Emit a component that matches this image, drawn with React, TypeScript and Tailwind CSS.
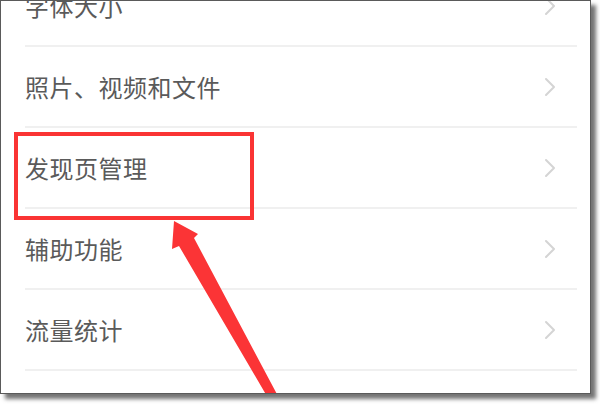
const items = ["字体大小", "照片、视频和文件", "发现页管理", "辅助功能", "流量统计"];

function Chevron() {
  return (
    <svg width="12" height="20" viewBox="0 0 12 20" fill="none" className="shrink-0">
      <path d="M2 2l8 8-8 8" stroke="#d4d4d4" strokeWidth="2" strokeLinecap="round" strokeLinejoin="round" />
    </svg>
  );
}

export default function App() {
  return (
    <div className="w-[600px] h-[404px] bg-white">
      <div className="relative w-[591px] h-[394px] overflow-hidden bg-white border border-[#5a5a5a] shadow-[5px_5px_4px_rgba(0,0,0,0.55)]">
        {/* settings list */}
        <div className="-mt-[35px] flex flex-col" style={{ fontFamily: '"Noto Sans CJK SC", "Noto Sans", sans-serif' }}>
          {items.map((label) => (
            <div key={label} className="h-[81px] pl-[24px] pr-[13px] flex flex-col">
              <div className="flex-1 flex items-center justify-between pr-[21px]">
                <span className="text-[24px] tracking-[0.5px] text-[#5a5a5a] leading-none">{label}</span>
                <Chevron />
              </div>
              <div className="h-[2px] bg-[#f0f0f0]" />
            </div>
          ))}
        </div>

        {/* highlight box */}
        <div className="absolute left-[13px] top-[131px] w-[240px] h-[88px] border-[4px] border-[#fa3434]" />

        {/* arrow */}
        <svg className="absolute left-0 top-0" width="591" height="394" viewBox="-1 -1 591 394">
          <polygon
            points="172,219 196,232 192,236 277,396 266,396 177,244 170,247"
            fill="#fb3436"
          />
        </svg>
      </div>
    </div>
  );
}
